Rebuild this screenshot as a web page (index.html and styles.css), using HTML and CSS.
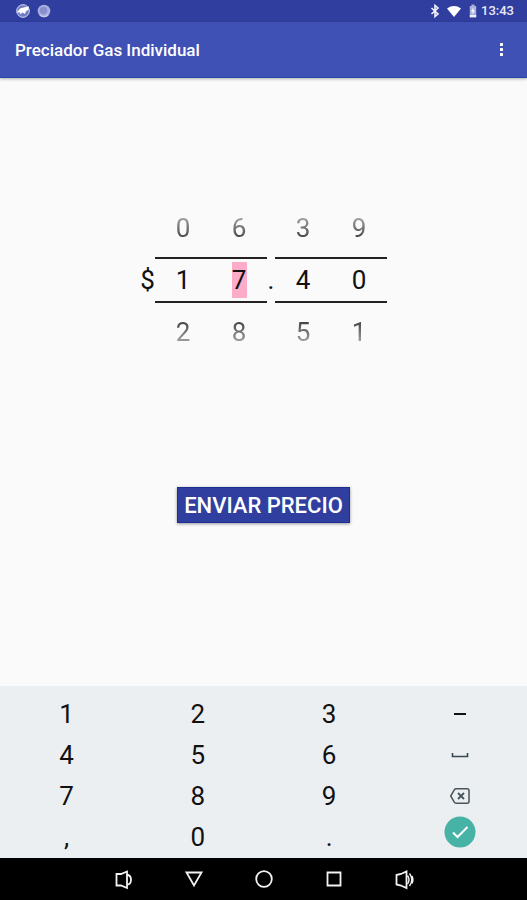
FILE: index.html
```html
<!DOCTYPE html>
<html lang="es">
<head>
<meta charset="utf-8">
<meta name="viewport" content="width=device-width, initial-scale=1">
<title>Preciador Gas Individual</title>
<link rel="stylesheet" href="styles.css">
</head>
<body>
<div class="status-bar">
  <div class="icons notifications">
    <svg width="16" height="16" viewBox="0 0 16 16" aria-hidden="true">
      <circle cx="8" cy="8" r="6.3" fill="#6f7bc4" stroke="#d5d9f0" stroke-width="1"/>
      <path d="M2 9.5 5 5.5 9.5 4.2 14 3.6 13.3 7 11 8.2 10 11 7.6 9.6 5 11.6 5.2 9.4z" fill="#fff"/>
    </svg>
    <svg width="16" height="16" viewBox="0 0 16 16" aria-hidden="true">
      <circle cx="8" cy="8" r="6.300" fill="#a9b0de"/>
      <circle cx="7.500" cy="7.500" r="3.800" fill="#8790cd"/>
      <path d="M4 12a6 6 0 0 0 8 0" fill="none" stroke="#c9cdeb" stroke-width="1.2"/>
    </svg>
  </div>
  <div class="system">
    <div class="icons">
      <svg width="16" height="16" viewBox="0 0 16 16" aria-hidden="true">
        <path d="M4.5 5 11 11 8 13.6V2.4L11 5 4.5 11" fill="none" stroke="#f2f3fb" stroke-width="1.6"/>
      </svg>
      <svg width="16" height="16" viewBox="0 0 16 16" aria-hidden="true">
        <path d="M1 5.4Q8 .6 15 5.400L8 14z" fill="#fff"/>
      </svg>
      <svg width="16" height="16" viewBox="0 0 16 16" aria-hidden="true">
        <path d="M6.500 1.500h3v1.500h1.700v11H4.800V3h1.700z" fill="#a9b1df"/>
        <path d="M4.800 12h6.400v2.400H4.800z" fill="#eef0fb"/>
        <path d="M8.400 4.500 6 8.600h1.600v2.600L10 7.500H8.400z" fill="#fff"/>
      </svg>
    </div>
    <time class="clock">13:43</time>
  </div>
</div>

<header class="app-bar">
  <h1 class="title">Preciador Gas Individual</h1>
  <button class="overflow" type="button" aria-label="Más opciones">
    <svg width="16" height="24" viewBox="0 0 16 24" fill="#fff">
      <rect x="7" y="5" width="3" height="3" rx=".5"/>
      <rect x="7" y="10" width="3" height="3" rx=".5"/>
      <rect x="7" y="15" width="3" height="3" rx=".5"/>
    </svg>
  </button>
</header>

<main class="content">
  <div class="price" role="group" aria-label="Precio">
    <span class="currency">$</span>
    <div class="picker">
      <button class="step above" type="button">0</button>
      <div class="value"><input class="digit" type="text" inputmode="numeric" aria-label="Decenas" value="1"></div>
      <button class="step below" type="button">2</button>
    </div>
    <div class="picker">
      <button class="step above" type="button">6</button>
      <div class="value"><input class="digit selected" type="text" inputmode="numeric" aria-label="Unidades" value="7"></div>
      <button class="step below" type="button">8</button>
    </div>
    <span class="point">.</span>
    <div class="picker">
      <button class="step above" type="button">3</button>
      <div class="value"><input class="digit" type="text" inputmode="numeric" aria-label="Décimas" value="4"></div>
      <button class="step below" type="button">5</button>
    </div>
    <div class="picker">
      <button class="step above" type="button">9</button>
      <div class="value"><input class="digit" type="text" inputmode="numeric" aria-label="Centésimas" value="0"></div>
      <button class="step below" type="button">1</button>
    </div>
  </div>
  <button class="send" type="button">ENVIAR PRECIO</button>
</main>

<section class="keypad" aria-label="Teclado">
  <button class="key" type="button">1</button>
  <button class="key" type="button">2</button>
  <button class="key" type="button">3</button>
  <button class="key" type="button" aria-label="Menos">
    <svg width="24" height="24" viewBox="0 0 24 24"><path d="M6 12h12" stroke="#111" stroke-width="2"/></svg>
  </button>
  <button class="key" type="button">4</button>
  <button class="key" type="button">5</button>
  <button class="key" type="button">6</button>
  <button class="key" type="button" aria-label="Espacio">
    <svg width="24" height="24" viewBox="0 0 24 24"><path d="M4.500 10v3.500h15V10" fill="none" stroke="#37474f" stroke-width="1.600"/></svg>
  </button>
  <button class="key" type="button">7</button>
  <button class="key" type="button">8</button>
  <button class="key" type="button">9</button>
  <button class="key" type="button" aria-label="Borrar">
    <svg width="24" height="24" viewBox="0 0 24 24" fill="none" stroke="#46545c" stroke-width="1.500"><path d="M8 4.700h11q2 0 2 2v10.600q0 2-2 2H8Q7 19.300 6.300 18.200L2.700 12 6.300 5.800Q7 4.700 8 4.700z"/><path d="m10 9 6 6m0-6-6 6" stroke-width="1.800"/></svg>
  </button>
  <button class="key" type="button">,</button>
  <button class="key" type="button">0</button>
  <button class="key" type="button">.</button>
  <button class="key enter" type="button" aria-label="Aceptar">
    <svg width="32" height="32" viewBox="0 0 32 32"><circle cx="16" cy="16" r="15.500" fill="#47b3a6"/><path d="m9 16.500 4.500 4.500L23.500 11" fill="none" stroke="#fff" stroke-width="2"/></svg>
  </button>
</section>

<nav class="nav-bar" aria-label="Sistema">
  <button class="nav-key" type="button" aria-label="Bajar volumen">
    <svg width="24" height="24" viewBox="0 0 24 24"><path d="M4.500 7H9l6-2.500V21l-6-2.500H4.500z"/><path d="M15 8q4 0 4 4.700T15 17.500"/></svg>
  </button>
  <button class="nav-key" type="button" aria-label="Atrás">
    <svg width="24" height="24" viewBox="0 0 24 24"><path d="M4.500 5.500h15L12 18.500z"/></svg>
  </button>
  <button class="nav-key" type="button" aria-label="Inicio">
    <svg width="24" height="24" viewBox="0 0 24 24"><circle cx="12" cy="12" r="7.800"/></svg>
  </button>
  <button class="nav-key" type="button" aria-label="Recientes">
    <svg width="24" height="24" viewBox="0 0 24 24"><path d="M5.500 5.500h13v13h-13z"/></svg>
  </button>
  <button class="nav-key" type="button" aria-label="Subir volumen">
    <svg width="24" height="24" viewBox="0 0 24 24"><path d="M4.500 8 9 7l5.500-2.500V21L9 18.500l-4.500-1z"/><path d="M15.500 8.500q3 4.200 0 8.500M17.500 6.500q4.500 6 0 12.500M20 9q1.800 3.700 0 7.500" stroke-width="1.400"/></svg>
  </button>
</nav>
</body>
</html>
```
FILE: styles.css
```css
* {
  box-sizing: border-box;
}

body {
  display: flex;
  flex-direction: column;
  min-height: 100vh;
  margin: 0;
  background: #fafafa;
  color: #111;
  font-family: Roboto, "Liberation Sans", sans-serif;
}

button,
input {
  margin: 0;
  padding: 0;
  border: 0;
  background: none;
  color: inherit;
  font: inherit;
}

svg {
  display: block;
}

.status-bar {
  display: flex;
  align-items: center;
  justify-content: space-between;
  height: 22px;
  padding: 0 13px 0 15px;
  background: #303f9f;
  color: #e8eaf8;
}

.system,
.icons {
  display: flex;
  align-items: center;
}

.icons {
  gap: 3px;
}

.notifications {
  gap: 5px;
}

.clock {
  font-size: 13px;
  font-weight: 500;
  line-height: 22px;
}

.app-bar {
  display: flex;
  align-items: center;
  justify-content: space-between;
  height: 56px;
  padding: 0 18px 0 15px;
  border-bottom: 1px solid #2446a8;
  background: #3f51b5;
  box-shadow: 0 1px 3px rgba(0, 0, 0, 0.3);
  color: #fff;
}

.title {
  margin: 0;
  font-size: 17px;
  font-weight: 500;
  line-height: 24px;
}

.content {
  display: flex;
  flex: 1;
  flex-direction: column;
  align-items: center;
  gap: 126px;
  padding: 121px 0;
}

.price {
  display: flex;
  align-items: center;
  font-size: 26px;
}

.currency {
  width: 15px;
  text-align: center;
}

.picker {
  display: grid;
  grid-template-rows: 58px 46px 58px;
  width: 56px;
}

.point {
  display: flex;
  justify-content: center;
  width: 8px;
}

.step {
  color: #222;
}

.above {
  mask-image: linear-gradient(transparent, #000 80%);
}

.below {
  mask-image: linear-gradient(#000 20%, transparent);
}

.value {
  display: flex;
  align-items: center;
  justify-content: center;
  border: solid #222;
  border-width: 2px 0;
}

.digit {
  width: 15px;
  height: 36px;
  text-align: center;
}

.selected {
  background: #fcabc9;
}

.send {
  height: 36px;
  padding: 0 6px;
  border: 1px solid #1d2d96;
  background: #303f9f;
  box-shadow: 0 1px 3px rgba(0, 0, 0, 0.4);
  color: #fff;
  font-size: 22px;
  font-weight: 500;
}

.keypad {
  display: grid;
  grid-template-columns: repeat(4, 1fr);
  grid-auto-rows: 41px;
  padding: 7px 1px 1px;
  background: #eceff1;
  font-size: 26px;
}

.key {
  display: flex;
  align-items: center;
  justify-content: center;
}

.enter {
  align-items: flex-start;
}

.nav-bar {
  display: grid;
  grid-template-columns: repeat(5, 70px);
  justify-content: center;
  height: 42px;
  background: #000;
}

.nav-key {
  display: flex;
  align-items: center;
  justify-content: center;
  fill: none;
  stroke: #f2f2f2;
  stroke-width: 1.800;
}
```
